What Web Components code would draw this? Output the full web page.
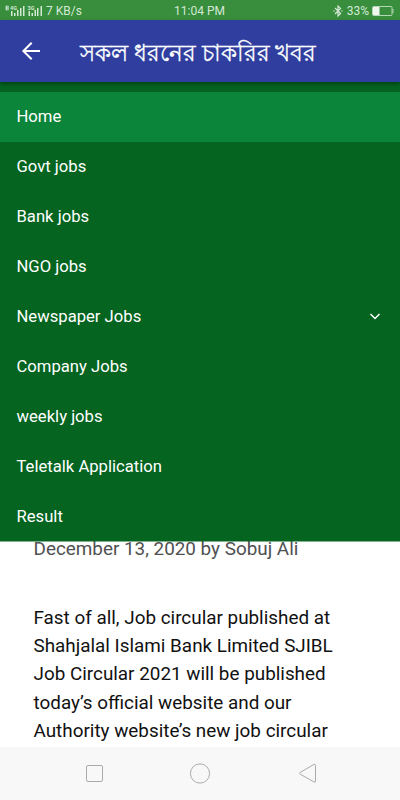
<!DOCTYPE html>
<html lang="en">
<head>
  <meta charset="UTF-8">
  <meta name="viewport" content="width=device-width, initial-scale=1.0">
  <title>সকল ধরনের চাকরির খবর</title>
  <style>
    body {
      margin: 0;
      background: #fff;
      font-family: Roboto, "Noto Sans", sans-serif;
    }
  </style>
</head>
<body>
  <job-app></job-app>

  <script>
    class StatusBar extends HTMLElement {
      constructor() {
        super();
        this.attachShadow({ mode: 'open' });
      }

      connectedCallback() {
        this.shadowRoot.innerHTML = `
          <style>
            :host {
              display: grid;
              grid-template-columns: 1fr auto 1fr;
              align-items: center;
              height: 20px;
              box-sizing: border-box;
              padding: 1px 6px 0 4px;
              background: #388e3c;
              color: #d3e8d4;
              font-size: 12px;
              line-height: 19px;
            }

            .left, .right {
              display: flex;
              align-items: center;
            }

            .right {
              justify-content: flex-end;
            }

            .signal { margin-right: 3px; }
            .speed { font-size: 12px; }
            .time { padding: 1px 0 0 1px; }
            .bluetooth { margin-right: 4px; }
            .battery { margin-left: 3px; }
            svg { display: block; }
          </style>

          <div class="left">
            <svg class="signal" width="39" height="16" viewBox="0 0 39 16" fill="currentColor">
              <path d="M1 4h4M1 6h4M2.5 2.5v5M4 2.5v5" stroke="currentColor" stroke-width=".8"/>
              <text x="6" y="6.5" font-size="5.5" font-weight="700">4G</text>
              <text x="23.5" y="6.5" font-size="5.5" font-weight="700">3G</text>
              <path d="M7 8h1.5v5H7zM10 10h1.5v3H10zM13 7h1.5v6H13zM16 5h1.5v8H16zM19 3h1.5v10H19z"/>
              <path d="M24.5 8H26v5h-1.5zM27.5 10H29v3h-1.5zM30.5 7H32v6h-1.5zM33 5h1.5v8H33zM36.5 3H38v10h-1.5z"/>
            </svg>
            <span class="speed">7 KB/s</span>
          </div>
          <span class="time">11:04 PM</span>
          <div class="right">
            <svg class="bluetooth" width="10" height="12" viewBox="0 0 10 12" fill="none" stroke="currentColor" stroke-width="1.2">
              <path d="M2 3l5.6 5.5L5 11V1l2.6 2.5L2 9"/>
              <path d="M.3 6h1.5M8.2 6h1.5"/>
            </svg>
            <span>33%</span>
            <svg class="battery" width="22" height="10" viewBox="0 0 22 10">
              <rect x=".5" y=".5" width="19.5" height="9" rx="1" fill="none" stroke="#b5d7b7"/>
              <rect x="1" y="1" width="6.5" height="8" fill="#eef6ee"/>
              <path d="M21 3v4" stroke="#b5d7b7"/>
            </svg>
          </div>
        `;
      }
    }

    class AppBar extends HTMLElement {
      constructor() {
        super();
        this.attachShadow({ mode: 'open' });
      }

      connectedCallback() {
        this.shadowRoot.innerHTML = `
          <style>
            :host {
              display: flex;
              align-items: center;
              position: relative;
              z-index: 2;
              height: 62px;
              padding-left: 19px;
              background: #303f9f;
              color: #fff;
              box-shadow: 0 2px 4px rgba(0, 0, 0, 0.35);
            }

            svg {
              display: block;
              margin-right: 37px;
            }

            h1 {
              margin: 0;
              padding-top: 4px;
              font-size: 23.3px;
              font-weight: 400;
              line-height: 30px;
              white-space: nowrap;
              -webkit-text-stroke: 0.3px currentColor;
            }
          </style>

          <svg width="24" height="24" viewBox="0 0 24 24" fill="none" stroke="currentColor" stroke-width="2">
            <path d="M21 12H5M12.7 3.7L4.4 12l8.3 8.3"/>
          </svg>
          <h1><slot></slot></h1>
        `;
      }
    }

    class MenuItem extends HTMLElement {
      constructor() {
        super();
        this.attachShadow({ mode: 'open' });
      }

      connectedCallback() {
        const arrow = this.hasAttribute('expandable')
          ? `<svg width="12" height="8" viewBox="0 0 12 8" fill="none" stroke="currentColor" stroke-width="1.5">
               <path d="M1.5 1L6 5.5 10.5 1"/>
             </svg>`
          : '';

        this.shadowRoot.innerHTML = `
          <style>
            :host {
              display: flex;
              align-items: center;
              justify-content: space-between;
              height: 50px;
              box-sizing: border-box;
              padding: 0 19px 1px 16.5px;
              color: #fff;
              font-size: 16.65px;
              line-height: 20px;
            }

            :host([active]) {
              background: #0b853a;
            }
          </style>
          <span><slot></slot></span>
          ${arrow}
        `;
      }
    }

    class NavMenu extends HTMLElement {
      constructor() {
        super();
        this.attachShadow({ mode: 'open' });
      }

      connectedCallback() {
        this.shadowRoot.innerHTML = `
          <style>
            :host {
              display: block;
              position: relative;
              z-index: 1;
              height: 459px;
              box-sizing: border-box;
              padding-top: 10px;
              background: #046420;
              box-shadow: 0 1px 0 rgba(4, 100, 32, 0.5);
              overflow: hidden;
            }
          </style>
          <slot></slot>
        `;
      }
    }

    class JobPost extends HTMLElement {
      constructor() {
        super();
        this.attachShadow({ mode: 'open' });
      }

      connectedCallback() {
        this.shadowRoot.innerHTML = `
          <style>
            :host {
              display: block;
              flex: 1;
              min-height: 0;
              padding: 0 33.5px;
              color: #111;
              font-size: 18.87px;
              line-height: 28.35px;
            }

            /* the open menu overlaps the top of the meta line */
            .meta {
              margin-top: -6.5px;
              color: #505050;
            }

            .text {
              margin-top: 40.8px;
              white-space: nowrap;
            }
          </style>
          <div class="meta"><slot name="meta"></slot></div>
          <div class="text"><slot></slot></div>
        `;
      }
    }

    class SystemNav extends HTMLElement {
      constructor() {
        super();
        this.attachShadow({ mode: 'open' });
      }

      connectedCallback() {
        this.shadowRoot.innerHTML = `
          <style>
            :host {
              display: flex;
              align-items: center;
              justify-content: space-between;
              height: 53px;
              box-sizing: border-box;
              padding: 0 83px;
              background: #f8f8f8;
            }
          </style>
          <svg width="22" height="22" viewBox="0 0 22 22" fill="none" stroke="#aaa">
            <rect x="3.5" y="2.5" width="16" height="16" rx="1.5"/>
          </svg>
          <svg width="22" height="22" viewBox="0 0 22 22" fill="none" stroke="#aaa">
            <circle cx="11" cy="10.5" r="9.6"/>
          </svg>
          <svg width="22" height="22" viewBox="0 0 22 22" fill="none" stroke="#aaa">
            <path d="M20.5 2.5v15.500q0 1.800-1.600.9L5.200 11.200q-1.200-.9 0-1.800L18.900 1.500q1.600-.8 1.600 1z"/>
          </svg>
        `;
      }
    }

    class JobApp extends HTMLElement {
      constructor() {
        super();
        this.attachShadow({ mode: 'open' });
      }

      connectedCallback() {
        this.shadowRoot.innerHTML = `
          <style>
            :host {
              display: flex;
              flex-direction: column;
              height: 800px;
              overflow: hidden;
            }
          </style>
          <status-bar></status-bar>
          <app-bar>সকল ধরনের চাকরির খবর</app-bar>
          <nav-menu>
            <menu-item active>Home</menu-item>
            <menu-item>Govt jobs</menu-item>
            <menu-item>Bank jobs</menu-item>
            <menu-item>NGO jobs</menu-item>
            <menu-item expandable>Newspaper Jobs</menu-item>
            <menu-item>Company Jobs</menu-item>
            <menu-item>weekly jobs</menu-item>
            <menu-item>Teletalk Application</menu-item>
            <menu-item>Result</menu-item>
          </nav-menu>
          <job-post>
            <span slot="meta">December 13, 2020 by Sobuj Ali</span>
            Fast of all, Job circular published at<br>
            Shahjalal Islami Bank Limited SJIBL<br>
            Job Circular 2021 will be published<br>
            today’s official website and our<br>
            Authority website’s new job circular
          </job-post>
          <system-nav></system-nav>
        `;
      }
    }

    customElements.define('status-bar', StatusBar);
    customElements.define('app-bar', AppBar);
    customElements.define('menu-item', MenuItem);
    customElements.define('nav-menu', NavMenu);
    customElements.define('job-post', JobPost);
    customElements.define('system-nav', SystemNav);
    customElements.define('job-app', JobApp);
  </script>
</body>
</html>
